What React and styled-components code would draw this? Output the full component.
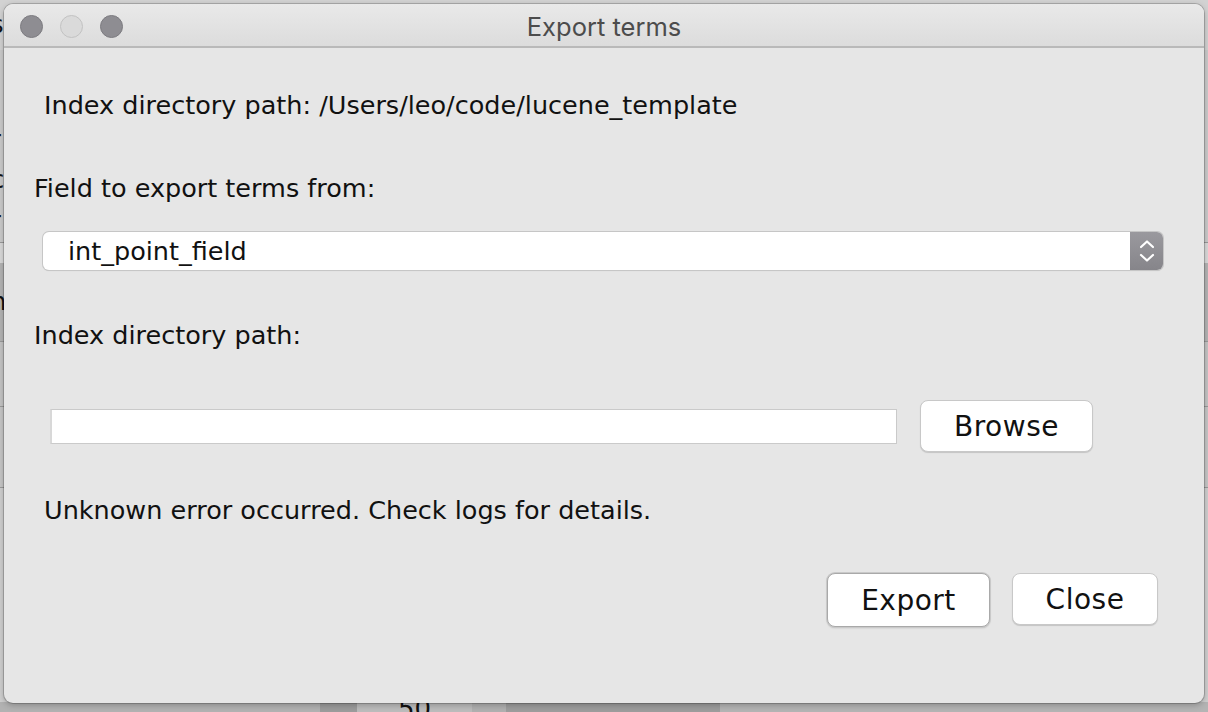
import React from "react";
import styled, { createGlobalStyle } from "styled-components";

const Global = createGlobalStyle`
  html, body { margin: 0; padding: 0; }
  body {
    width: 1208px;
    height: 712px;
    overflow: hidden;
    background: #c9c9c9;
    font-family: "DejaVu Sans", "Liberation Sans", sans-serif;
  }
`;

const Desktop = styled.div`
  position: relative;
  width: 1208px;
  height: 712px;
  overflow: hidden;
  background: #cfcfcf;
`;

const Backdrop = styled.div`
  position: absolute;
  inset: 0;
  display: flex;
  flex-direction: column;
`;

const BackRow = styled.div`
  height: ${(p) => p.h}px;
  background: ${(p) => p.bg};
  border-bottom: ${(p) => (p.line ? "1px solid #9a9a9a" : "none")};
  display: flex;
  justify-content: space-between;
  align-items: center;
  font-size: 24px;
  color: #111;
  overflow: hidden;
`;

const EdgeGlyph = styled.span`
  margin-left: ${(p) => (p.right ? "0" : "-9px")};
  margin-right: ${(p) => (p.right ? "-10px" : "0")};
`;

const BottomStrip = styled.div`
  margin-top: auto;
  height: 10px;
  display: flex;
  overflow: hidden;
`;

const Seg = styled.div`
  width: ${(p) => p.w}px;
  background: ${(p) => p.bg};
  font-size: 26px;
  color: #111;
  line-height: 14px;
  text-align: center;
  flex: none;
`;

const Window = styled.div`
  position: absolute;
  left: 4px;
  top: 4px;
  width: 1200px;
  height: 699px;
  border-radius: 9px;
  background: #e6e6e6;
  box-shadow: 0 0 0 1px rgba(0, 0, 0, 0.18), 0 2px 6px rgba(0, 0, 0, 0.25);
  display: flex;
  flex-direction: column;
  overflow: hidden;
`;

const TitleBar = styled.div`
  height: 42px;
  flex: none;
  position: relative;
  display: flex;
  align-items: center;
  padding-left: 16px;
  gap: 17px;
  background: linear-gradient(#e9e9e9, #dcdcdc);
  border-bottom: 2px solid #b9b9b9;
`;

const Light = styled.div`
  width: 23px;
  height: 23px;
  margin-top: 2px;
  border-radius: 50%;
  box-sizing: border-box;
  background: ${(p) => (p.off ? "#dadada" : "#8e8d92")};
  border: 1px solid ${(p) => (p.off ? "#c2c2c2" : "#7c7b80")};
`;

const Title = styled.div`
  position: absolute;
  left: 0;
  right: 0;
  top: 2px;
  bottom: 0;
  display: flex;
  align-items: center;
  justify-content: center;
  font-family: Inter, "Liberation Sans", sans-serif;
  font-size: 25.5px;
  color: #4c4c4c;
  pointer-events: none;
`;

const Body = styled.div`
  flex: 1;
  display: flex;
  flex-direction: column;
  padding: 0 41px 0 30px;
  font-size: 25.5px;
  color: #111;
`;

const Label = styled.div`
  padding-left: ${(p) => p.indent || 0}px;
  margin-top: ${(p) => p.mt}px;
  line-height: 28px;
  height: 28px;
  white-space: nowrap;
`;

const Select = styled.div`
  margin: ${(p) => p.mt}px 0 0 9px;
  height: 38px;
  display: flex;
  border-radius: 6px;
  background: #fff;
  box-shadow: 0 0 0 1px #c6c6c6, 0 1px 1px rgba(0, 0, 0, 0.15);
  overflow: hidden;
`;

const SelectValue = styled.div`
  flex: 1;
  padding-left: 25px;
  display: flex;
  align-items: center;
  font-size: 25.5px;
`;

const Stepper = styled.div`
  width: 33px;
  background: linear-gradient(#9a999e, #86858a);
  display: flex;
  align-items: center;
  justify-content: center;
`;

const FieldRow = styled.div`
  margin-top: ${(p) => p.mt}px;
  display: flex;
  align-items: center;
  padding-left: 16px;
  gap: 23px;
`;

const TextField = styled.div`
  width: 847px;
  height: 35px;
  box-sizing: border-box;
  background: #fff;
  border: 1px solid #cacaca;
  border-left: 2px solid #d8d8d8;
`;

const Button = styled.button`
  width: ${(p) => p.w}px;
  height: ${(p) => p.h || 52}px;
  box-sizing: border-box;
  border-radius: 8px;
  background: #fff;
  border: 1px solid ${(p) => (p.primary ? "#a9a9a9" : "#c8c8c8")};
  box-shadow: ${(p) =>
    p.primary
      ? "0 0 0 1px #c9c9c9, 0 1px 2px rgba(0,0,0,0.2)"
      : "0 1px 1px rgba(0,0,0,0.15)"};
  font-family: "DejaVu Sans", "Liberation Sans", sans-serif;
  font-size: 28px;
  color: #111;
  padding: 0;
  letter-spacing: 0.5px;
`;

const Actions = styled.div`
  margin-top: 49px;
  padding-right: 5px;
  display: flex;
  justify-content: flex-end;
  gap: 22px;
`;

export default function App() {
  return (
    <>
      <Global />
      <Desktop>
        <Backdrop>
          <BackRow h={50} bg="#d2d2d2">
            <EdgeGlyph>s</EdgeGlyph>
          </BackRow>
          <BackRow h={70} bg="#cbcbcb" />
          <BackRow h={40} bg="#cbcbcb">
            <EdgeGlyph>r</EdgeGlyph>
          </BackRow>
          <BackRow h={40} bg="#cbcbcb">
            <EdgeGlyph>c</EdgeGlyph>
          </BackRow>
          <BackRow h={42} bg="#cbcbcb" line>
            <EdgeGlyph>r</EdgeGlyph>
          </BackRow>
          <BackRow h={20} bg="#d9d9d9" />
          <BackRow h={78} bg="#b4b4b4" line>
            <EdgeGlyph>n</EdgeGlyph>
            <EdgeGlyph right>r</EdgeGlyph>
          </BackRow>
          <BackRow h={64} bg="#c4c4c4" line />
          <BackRow h={80} bg="#c6c6c6" line />
          <BottomStrip>
            <Seg w={320} bg="#b2b2b2" />
            <Seg w={37} bg="#9c9c9c" />
            <Seg w={115} bg="#bcbcbc">
              50
            </Seg>
            <Seg w={34} bg="#b0b0b0" />
            <Seg w={214} bg="#9d9d9d" />
            <Seg w={488} bg="#b4b4b4" />
          </BottomStrip>
        </Backdrop>
        <Window>
          <TitleBar>
            <Light />
            <Light off />
            <Light />
            <Title>Export terms</Title>
          </TitleBar>
          <Body>
            <Label indent={10} mt={43}>
              Index directory path: /Users/leo/code/lucene_template
            </Label>
            <Label mt={55}>Field to export terms from:</Label>
            <Select mt={30}>
              <SelectValue>int_point_field</SelectValue>
              <Stepper>
                <svg width="18" height="26" viewBox="0 0 18 26" fill="none">
                  <path
                    d="M3 9 L9 3.5 L15 9"
                    stroke="#fff"
                    strokeWidth="2.2"
                    strokeLinecap="round"
                    strokeLinejoin="round"
                  />
                  <path
                    d="M3 17 L9 22.5 L15 17"
                    stroke="#fff"
                    strokeWidth="2.2"
                    strokeLinecap="round"
                    strokeLinejoin="round"
                  />
                </svg>
              </Stepper>
            </Select>
            <Label mt={51}>Index directory path:</Label>
            <FieldRow mt={51}>
              <TextField />
              <Button w={173}>Browse</Button>
            </FieldRow>
            <Label indent={10} mt={44}>
              Unknown error occurred. Check logs for details.
            </Label>
            <Actions>
              <Button w={163} h={54} primary>
                Export
              </Button>
              <Button w={146}>Close</Button>
            </Actions>
          </Body>
        </Window>
      </Desktop>
    </>
  );
}
